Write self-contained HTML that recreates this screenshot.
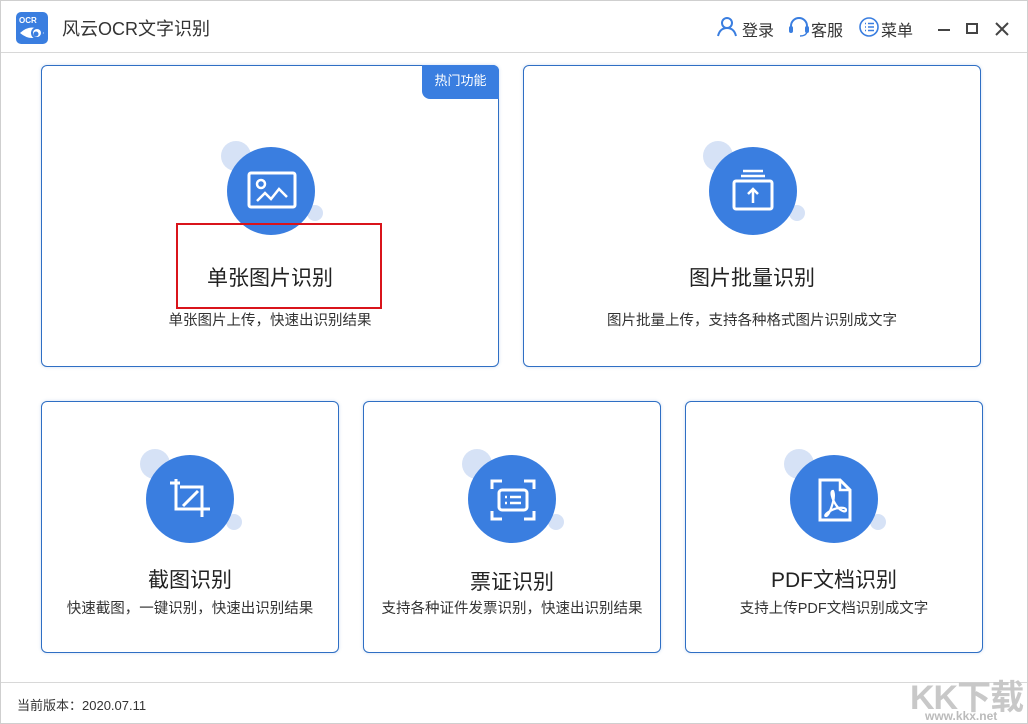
<!DOCTYPE html>
<html><head><meta charset="utf-8"><style>
*{margin:0;padding:0;box-sizing:border-box}
body{width:1028px;height:724px;overflow:hidden;background:#fff;font-family:"Liberation Sans","Noto Sans CJK SC",sans-serif;position:relative;color:#333}
.win{position:absolute;left:0;top:0;width:1028px;height:724px;border:1px solid #cfcfcf}
.abs{position:absolute}
.card{position:absolute;border:1px solid #2f6fc4;border-radius:6px;background:#fff;box-shadow:0 0 3px rgba(60,120,200,.25)}
.c{position:absolute;border-radius:50%}
.big{width:88px;height:88px;background:#3a7ee0}
.l1{width:30px;height:30px;background:#d6e2f6}
.l2{width:16px;height:16px;background:#d6e2f6}
.t{position:absolute;left:0;right:0;text-align:center;font-size:20px;color:#222}
.s{position:absolute;left:0;right:0;text-align:center;font-size:14.5px;color:#333}
</style></head><body>
<div class="win"></div>
<svg class="abs" style="left:16px;top:12px" width="32" height="32" viewBox="0 0 32 32"><rect width="32" height="32" rx="5" fill="#3a7ee0"/><text x="3" y="11" font-size="8" font-weight="bold" fill="#fff" font-family="Liberation Sans">OCR</text><path d="M4 21 Q16 10 28 21 Q16 31 4 21Z" fill="#fff"/><circle cx="21" cy="21" r="6" fill="#3a7ee0"/><circle cx="21" cy="21" r="4" fill="#fff"/><circle cx="20" cy="22" r="2.5" fill="#3a7ee0"/></svg>
<div class="abs" style="left:62px;top:15px;font-size:18px;color:#333">风云OCR文字识别</div>
<svg class="abs" style="left:716px;top:16px" width="22" height="22" viewBox="0 0 22 22"><circle cx="11" cy="7" r="5" fill="none" stroke="#3a7ee0" stroke-width="2"/><path d="M2 20 Q4 12 11 12 Q18 12 20 20" fill="none" stroke="#3a7ee0" stroke-width="2"/></svg>
<div class="abs" style="left:742px;top:17px;font-size:16px">登录</div>
<svg class="abs" style="left:788px;top:16px" width="22" height="22" viewBox="0 0 22 22"><path d="M3 13 V10 A8 8 0 0 1 19 10 V13" fill="none" stroke="#3a7ee0" stroke-width="2"/><rect x="1" y="10" width="4" height="7" rx="2" fill="#3a7ee0"/><rect x="17" y="10" width="4" height="7" rx="2" fill="#3a7ee0"/><path d="M19 16 Q18 20 12 20" fill="none" stroke="#3a7ee0" stroke-width="1.5"/></svg>
<div class="abs" style="left:811px;top:17px;font-size:16px">客服</div>
<svg class="abs" style="left:858px;top:16px" width="22" height="22" viewBox="0 0 22 22"><circle cx="11" cy="11" r="9" fill="none" stroke="#3a7ee0" stroke-width="1.6"/><path d="M7 7.5h1M10 7.5h6M7 11h1M10 11h6M7 14.5h1M10 14.5h6" stroke="#3a7ee0" stroke-width="1.6"/></svg>
<div class="abs" style="left:881px;top:17px;font-size:16px">菜单</div>
<div class="abs" style="left:938px;top:29px;width:12px;height:2px;background:#444"></div>
<div class="abs" style="left:966px;top:23px;width:12px;height:11px;border:2px solid #444"></div>
<svg class="abs" style="left:995px;top:22px" width="14" height="14"><path d="M1 1L13 13M13 1L1 13" stroke="#444" stroke-width="2"/></svg>
<div class="abs" style="left:1px;top:52px;width:1026px;height:1px;background:#d8d8d8"></div>

<div class="card" style="left:41px;top:65px;width:458px;height:302px">
 <div class="abs" style="right:-1px;top:-1px;width:77px;height:34px;background:#3a7ee0;border-radius:0 6px 0 8px;color:#fff;font-size:13px;text-align:center;line-height:32px">热门功能</div>
 <div class="c l1" style="left:179px;top:75px"></div>
 <div class="c l2" style="left:265px;top:139px"></div>
 <div class="c big" style="left:185px;top:81px"></div>
 <svg class="abs" style="left:205px;top:105px" width="50" height="40" viewBox="0 0 50 40"><rect x="2" y="2" width="46" height="34" rx="2" fill="none" stroke="#fff" stroke-width="3"/><circle cx="14" cy="13" r="4" fill="none" stroke="#fff" stroke-width="2.5"/><path d="M10 30 L18 22 L24 28 L32 18 L40 26" fill="none" stroke="#fff" stroke-width="2.5"/></svg>
 <div class="t" style="top:196px;font-size:21px">单张图片识别</div>
 <div class="s" style="top:243px">单张图片上传，快速出识别结果</div>
</div>
<div class="abs" style="left:176px;top:223px;width:206px;height:86px;border:2px solid #d9141b"></div>

<div class="card" style="left:523px;top:65px;width:458px;height:302px">
 <div class="c l1" style="left:179px;top:75px"></div>
 <div class="c l2" style="left:265px;top:139px"></div>
 <div class="c big" style="left:185px;top:81px"></div>
 <svg class="abs" style="left:205px;top:101px" width="48" height="48" viewBox="0 0 48 48"><path d="M14 4h20M12 9h24" stroke="#fff" stroke-width="2.5"/><rect x="5" y="14" width="38" height="28" rx="2" fill="none" stroke="#fff" stroke-width="3"/><path d="M24 36V22M19 27l5-5 5 5" fill="none" stroke="#fff" stroke-width="2.5"/></svg>
 <div class="t" style="top:196px;font-size:21px">图片批量识别</div>
 <div class="s" style="top:243px">图片批量上传，支持各种格式图片识别成文字</div>
</div>

<div class="card" style="left:41px;top:401px;width:298px;height:252px">
 <div class="c l1" style="left:98px;top:47px"></div>
 <div class="c l2" style="left:184px;top:112px"></div>
 <div class="c big" style="left:104px;top:53px"></div>
 <svg class="abs" style="left:126px;top:75px" width="46" height="46" viewBox="0 0 46 46"><path d="M2 6h10M8 2v30h30M12 10h22v30" fill="none" stroke="#fff" stroke-width="3"/><path d="M34 32h8M15 29L30 14" fill="none" stroke="#fff" stroke-width="3"/></svg>
 <div class="t" style="top:162px;font-size:21px">截图识别</div>
 <div class="s" style="top:195px">快速截图，一键识别，快速出识别结果</div>
</div>
<div class="card" style="left:363px;top:401px;width:298px;height:252px">
 <div class="c l1" style="left:98px;top:47px"></div>
 <div class="c l2" style="left:184px;top:112px"></div>
 <div class="c big" style="left:104px;top:53px"></div>
 <svg class="abs" style="left:126px;top:75px" width="46" height="46" viewBox="0 0 46 46"><path d="M2 12V4h10M34 4h10v8M44 34v8H34M12 42H2v-8" fill="none" stroke="#fff" stroke-width="3"/><rect x="9" y="13" width="28" height="20" rx="3" fill="none" stroke="#fff" stroke-width="3"/><path d="M15 20h2M20 20h11M15 26h2M20 26h11" stroke="#fff" stroke-width="2.5"/></svg>
 <div class="t" style="top:164px;font-size:21px">票证识别</div>
 <div class="s" style="top:195px">支持各种证件发票识别，快速出识别结果</div>
</div>
<div class="card" style="left:685px;top:401px;width:298px;height:252px">
 <div class="c l1" style="left:98px;top:47px"></div>
 <div class="c l2" style="left:184px;top:112px"></div>
 <div class="c big" style="left:104px;top:53px"></div>
 <svg class="abs" style="left:126px;top:75px" width="46" height="46" viewBox="0 0 46 46"><path d="M8 3h20l10 10v30H8z" fill="none" stroke="#fff" stroke-width="3"/><path d="M28 3v10h10" fill="none" stroke="#fff" stroke-width="2.5"/><path d="M21 14c-3 0-1 8 3 14s10 8 10 5-8-3-14 0-8 6-6 6 5-6 7-14 0-11 0-11z" fill="none" stroke="#fff" stroke-width="2.2"/></svg>
 <div class="t" style="top:162px;font-size:21px">PDF文档识别</div>
 <div class="s" style="top:195px">支持上传PDF文档识别成文字</div>
</div>

<div class="abs" style="left:1px;top:682px;width:1026px;height:1px;background:#d8d8d8"></div>
<div class="abs" style="left:17px;top:695px;font-size:13px;color:#333">当前版本：2020.07.11</div>
<div class="abs" style="left:910px;top:670px;font-size:34px;font-weight:bold;color:#c8c8c8;letter-spacing:-1px">KK下载</div>
<div class="abs" style="left:925px;top:709px;font-size:12px;font-weight:bold;color:#bbb">www.kkx.net</div>
</body></html>
